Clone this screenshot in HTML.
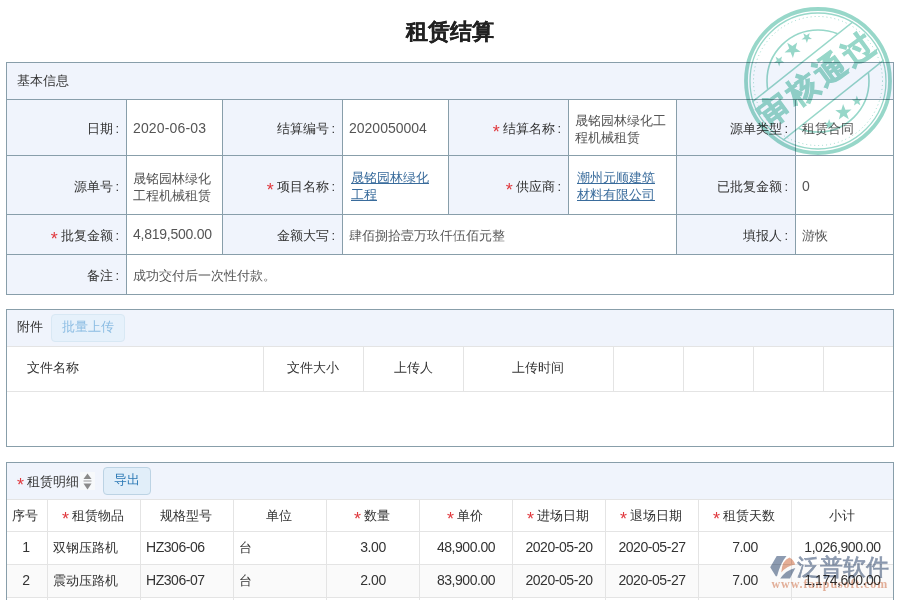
<!DOCTYPE html>
<html><head><meta charset="utf-8">
<style>
*{box-sizing:border-box;margin:0;padding:0}
html,body{width:900px;height:600px;overflow:hidden;background:#fff}
body{position:relative;font-family:"Liberation Sans",sans-serif;font-size:13px;color:#333}
.a{position:absolute;white-space:nowrap;line-height:17px}
.title{position:absolute;left:0;top:18px;width:900px;text-align:center;font-size:22px;font-weight:bold;color:#222;-webkit-text-stroke:0.25px #222;line-height:28px}
.hl{position:absolute;height:1px;background:#889eaa}
.vl{position:absolute;width:1px;background:#889eaa}
.lbg{position:absolute;background:#f0f4fc}
.lab{position:absolute;text-align:right;line-height:17px;color:#333;white-space:nowrap}
.val{position:absolute;line-height:17px;color:#555;white-space:nowrap}
.c{margin-left:2.5px}
.req{display:inline-block;color:#e0393e;font-size:18px;line-height:10px;height:10px;vertical-align:-5px;margin-right:3px}
.lnk{color:#3a6c9c;text-decoration:underline;text-underline-offset:1px}
.ghl{position:absolute;height:1px;background:#e4e4e4}
.gvl{position:absolute;width:1px;background:#e4e4e4}
.th{position:absolute;line-height:17px;color:#333;white-space:nowrap;text-align:center}
.td{position:absolute;line-height:17px;color:#333;white-space:nowrap}
.n{font-size:14px}
.stripe{position:absolute;background:#fafafa}
.tn{font-size:14px;letter-spacing:-0.45px}
</style></head><body>
<div class="title">租赁结算</div>
<div class="lbg" style="left:6px;top:62px;width:887px;height:37px"></div>
<div class="a" style="left:17px;top:72px">基本信息</div>
<div class="lbg" style="left:6px;top:99px;width:120px;height:196px"></div>
<div class="lbg" style="left:222px;top:99px;width:120px;height:156px"></div>
<div class="lbg" style="left:448px;top:99px;width:120px;height:116px"></div>
<div class="lbg" style="left:676px;top:99px;width:119px;height:156px"></div>
<div class="hl" style="left:6px;top:62px;width:888px"></div>
<div class="hl" style="left:6px;top:99px;width:888px"></div>
<div class="hl" style="left:6px;top:155px;width:888px"></div>
<div class="hl" style="left:6px;top:214px;width:888px"></div>
<div class="hl" style="left:6px;top:254px;width:888px"></div>
<div class="hl" style="left:6px;top:294px;width:888px"></div>
<div class="vl" style="left:6px;top:62px;height:233px"></div>
<div class="vl" style="left:893px;top:62px;height:233px"></div>
<div class="vl" style="left:126px;top:99px;height:196px"></div>
<div class="vl" style="left:222px;top:99px;height:156px"></div>
<div class="vl" style="left:342px;top:99px;height:156px"></div>
<div class="vl" style="left:448px;top:99px;height:116px"></div>
<div class="vl" style="left:568px;top:99px;height:116px"></div>
<div class="vl" style="left:676px;top:99px;height:156px"></div>
<div class="vl" style="left:795px;top:99px;height:156px"></div>
<div class="lab" style="right:781px;top:120px">日期<span class="c">:</span></div>
<div class="val " style="left:133px;top:120px"><span class="n" style="letter-spacing:0.15px">2020-06-03</span></div>
<div class="lab" style="right:565px;top:120px">结算编号<span class="c">:</span></div>
<div class="val " style="left:349px;top:120px"><span class="n">2020050004</span></div>
<div class="lab" style="right:339px;top:120px"><span class="req">*</span>结算名称<span class="c">:</span></div>
<div class="val " style="left:575px;top:112px">晟铭园林绿化工<br>程机械租赁</div>
<div class="lab" style="right:112px;top:120px">源单类型<span class="c">:</span></div>
<div class="val " style="left:802px;top:120px">租赁合同</div>
<div class="lab" style="right:781px;top:178px">源单号<span class="c">:</span></div>
<div class="val " style="left:133px;top:170px">晟铭园林绿化<br>工程机械租赁</div>
<div class="lab" style="right:565px;top:178px"><span class="req">*</span>项目名称<span class="c">:</span></div>
<div class="val lnk" style="left:351px;top:169px">晟铭园林绿化<br>工程</div>
<div class="lab" style="right:339px;top:178px"><span class="req">*</span>供应商<span class="c">:</span></div>
<div class="val lnk" style="left:577px;top:169px">潮州元顺建筑<br>材料有限公司</div>
<div class="lab" style="right:112px;top:178px">已批复金额<span class="c">:</span></div>
<div class="val " style="left:802px;top:178px"><span class="n">0</span></div>
<div class="lab" style="right:781px;top:227px"><span class="req">*</span>批复金额<span class="c">:</span></div>
<div class="val " style="left:133px;top:226px"><span class="n" style="letter-spacing:-0.25px">4,819,500.00</span></div>
<div class="lab" style="right:565px;top:227px">金额大写<span class="c">:</span></div>
<div class="val " style="left:349px;top:227px">肆佰捌拾壹万玖仟伍佰元整</div>
<div class="lab" style="right:112px;top:227px">填报人<span class="c">:</span></div>
<div class="val " style="left:802px;top:227px">游恢</div>
<div class="lab" style="right:781px;top:267px">备注<span class="c">:</span></div>
<div class="val " style="left:133px;top:267px">成功交付后一次性付款。</div>
<div class="lbg" style="left:6px;top:309px;width:887px;height:37px"></div>
<div class="a" style="left:17px;top:318px">附件</div>
<div class="a" style="left:51px;top:314px;width:74px;height:28px;border:1px solid #d8e8f4;background:#e6f1fb;border-radius:4px;color:#8cbde3;text-align:center;line-height:24px">批量上传</div>
<div class="hl" style="left:6px;top:309px;width:888px"></div>
<div class="hl" style="left:6px;top:446px;width:888px"></div>
<div class="vl" style="left:6px;top:309px;height:138px"></div>
<div class="vl" style="left:893px;top:309px;height:138px"></div>
<div class="ghl" style="left:7px;top:346px;width:886px"></div>
<div class="ghl" style="left:7px;top:391px;width:886px"></div>
<div class="gvl" style="left:263px;top:346px;height:45px"></div>
<div class="gvl" style="left:363px;top:346px;height:45px"></div>
<div class="gvl" style="left:463px;top:346px;height:45px"></div>
<div class="gvl" style="left:613px;top:346px;height:45px"></div>
<div class="gvl" style="left:683px;top:346px;height:45px"></div>
<div class="gvl" style="left:753px;top:346px;height:45px"></div>
<div class="gvl" style="left:823px;top:346px;height:45px"></div>
<div class="th" style="left:27px;top:359px">文件名称</div>
<div class="th" style="left:263px;top:359px;width:100px">文件大小</div>
<div class="th" style="left:363px;top:359px;width:100px">上传人</div>
<div class="th" style="left:463px;top:359px;width:150px">上传时间</div>
<div class="lbg" style="left:6px;top:462px;width:887px;height:37px"></div>
<div class="a" style="left:17px;top:473px"><span class="req">*</span>租赁明细</div>
<div class="a" style="left:80px;top:472px;width:15px;height:18px;background:#f7f9fb"></div>
<svg class="a" style="left:80px;top:472px" width="15" height="19" viewBox="0 0 15 19"><polygon points="7.5,1.5 11.5,7 3.5,7" fill="#8a8a8a"/><rect x="3.5" y="8.5" width="8" height="1" fill="#9a9a9a"/><polygon points="3.5,11.5 11.5,11.5 7.5,17.5" fill="#8a8a8a"/></svg>
<div class="a" style="left:103px;top:467px;width:48px;height:28px;border:1px solid #bcd3e4;background:#e1eef9;border-radius:4px;color:#2d7ab5;text-align:center;line-height:24px">导出</div>
<div class="hl" style="left:6px;top:462px;width:888px"></div>
<div class="vl" style="left:6px;top:462px;height:138px"></div>
<div class="vl" style="left:893px;top:462px;height:138px"></div>
<div class="stripe" style="left:7px;top:565px;width:886px;height:32px"></div>
<div class="ghl" style="left:7px;top:499px;width:886px"></div>
<div class="ghl" style="left:7px;top:531px;width:886px"></div>
<div class="ghl" style="left:7px;top:564px;width:886px"></div>
<div class="ghl" style="left:7px;top:597px;width:886px"></div>
<div class="gvl" style="left:47px;top:499px;height:101px"></div>
<div class="gvl" style="left:140px;top:499px;height:101px"></div>
<div class="gvl" style="left:233px;top:499px;height:101px"></div>
<div class="gvl" style="left:326px;top:499px;height:101px"></div>
<div class="gvl" style="left:419px;top:499px;height:101px"></div>
<div class="gvl" style="left:512px;top:499px;height:101px"></div>
<div class="gvl" style="left:605px;top:499px;height:101px"></div>
<div class="gvl" style="left:698px;top:499px;height:101px"></div>
<div class="gvl" style="left:791px;top:499px;height:101px"></div>
<div class="th" style="left:5px;top:507px;width:40px">序号</div>
<div class="th" style="left:47px;top:507px;width:92px"><span class="req">*</span>租赁物品</div>
<div class="th" style="left:140px;top:507px;width:92px">规格型号</div>
<div class="th" style="left:233px;top:507px;width:92px">单位</div>
<div class="th" style="left:326px;top:507px;width:92px"><span class="req">*</span>数量</div>
<div class="th" style="left:419px;top:507px;width:92px"><span class="req">*</span>单价</div>
<div class="th" style="left:512px;top:507px;width:92px"><span class="req">*</span>进场日期</div>
<div class="th" style="left:605px;top:507px;width:92px"><span class="req">*</span>退场日期</div>
<div class="th" style="left:698px;top:507px;width:92px"><span class="req">*</span>租赁天数</div>
<div class="th" style="left:791px;top:507px;width:101px">小计</div>
<div class="td" style="left:6px;top:539px;width:40px;text-align:center"><span class="tn">1</span></div>
<div class="td" style="left:53px;top:539px">双钢压路机</div>
<div class="td" style="left:146px;top:539px"><span class="tn">HZ306-06</span></div>
<div class="td" style="left:239px;top:539px">台</div>
<div class="td" style="left:327px;top:539px;width:92px;text-align:center"><span class="tn">3.00</span></div>
<div class="td" style="left:420px;top:539px;width:92px;text-align:center"><span class="tn">48,900.00</span></div>
<div class="td" style="left:513px;top:539px;width:92px;text-align:center"><span class="tn">2020-05-20</span></div>
<div class="td" style="left:606px;top:539px;width:92px;text-align:center"><span class="tn">2020-05-27</span></div>
<div class="td" style="left:699px;top:539px;width:92px;text-align:center"><span class="tn">7.00</span></div>
<div class="td" style="left:792px;top:539px;width:101px;text-align:center"><span class="tn">1,026,900.00</span></div>
<div class="td" style="left:6px;top:572px;width:40px;text-align:center"><span class="tn">2</span></div>
<div class="td" style="left:53px;top:572px">震动压路机</div>
<div class="td" style="left:146px;top:572px"><span class="tn">HZ306-07</span></div>
<div class="td" style="left:239px;top:572px">台</div>
<div class="td" style="left:327px;top:572px;width:92px;text-align:center"><span class="tn">2.00</span></div>
<div class="td" style="left:420px;top:572px;width:92px;text-align:center"><span class="tn">83,900.00</span></div>
<div class="td" style="left:513px;top:572px;width:92px;text-align:center"><span class="tn">2020-05-20</span></div>
<div class="td" style="left:606px;top:572px;width:92px;text-align:center"><span class="tn">2020-05-27</span></div>
<div class="td" style="left:699px;top:572px;width:92px;text-align:center"><span class="tn">7.00</span></div>
<div class="td" style="left:792px;top:572px;width:101px;text-align:center"><span class="tn">1,174,600.00</span></div>
<svg class="a" style="left:0;top:0;mix-blend-mode:multiply" width="900" height="600" viewBox="0 0 900 600">
<defs><mask id="bm"><rect x="0" y="0" width="900" height="600" fill="#fff"/><rect x="738" y="56" width="160" height="50" fill="#000" transform="rotate(-38.5 818 81)"/></mask>
<clipPath id="cc"><circle cx="818" cy="81" r="69"/></clipPath></defs>
<g opacity="0.62">
<circle cx="818" cy="81" r="72" fill="none" stroke="#58bfa8" stroke-width="3.8"/>
<circle cx="818" cy="81" r="68" fill="none" stroke="#58bfa8" stroke-width="1.3"/>
<circle cx="818" cy="81" r="64.5" fill="none" stroke="#58bfa8" stroke-width="1" stroke-dasharray="1 3"/>
<circle cx="818" cy="81" r="51" fill="none" stroke="#58bfa8" stroke-width="1.6" mask="url(#bm)"/>
<g clip-path="url(#cc)" transform="rotate(-38.5 818 81)">
<line x1="738" y1="56.5" x2="898" y2="56.5" stroke="#58bfa8" stroke-width="1.5"/>
<line x1="738" y1="105.5" x2="898" y2="105.5" stroke="#58bfa8" stroke-width="1.5"/>
</g>
<g fill="#58bfa8"><polygon points="775.6,56.7 778.9,58.8 782.0,56.4 781.1,60.2 784.3,62.5 780.4,62.7 779.2,66.5 777.8,62.8 773.8,62.9 776.9,60.4"/><polygon points="860.4,105.3 857.1,103.2 854.0,105.6 854.9,101.8 851.7,99.5 855.6,99.3 856.8,95.5 858.2,99.2 862.2,99.1 859.1,101.6"/><polygon points="787.2,42.8 792.4,46.1 797.2,42.4 795.7,48.3 800.7,51.8 794.6,52.2 792.9,58.0 790.6,52.3 784.5,52.5 789.2,48.6"/><polygon points="848.8,119.2 843.6,115.9 838.8,119.6 840.3,113.7 835.3,110.2 841.4,109.8 843.1,104.0 845.4,109.7 851.5,109.5 846.8,113.4"/><polygon points="803.3,33.2 806.6,35.3 809.7,32.9 808.8,36.7 812.0,39.0 808.1,39.2 806.9,43.0 805.5,39.3 801.5,39.4 804.6,36.9"/><polygon points="832.7,128.8 829.4,126.7 826.3,129.1 827.2,125.3 824.0,123.0 827.9,122.8 829.1,119.0 830.5,122.7 834.5,122.6 831.4,125.1"/></g>
<g transform="translate(-0.5,-2.8)"><text x="818" y="92" text-anchor="middle" font-family="Liberation Sans, sans-serif" font-weight="900" font-size="31" letter-spacing="3.6" fill="#58bfa8" stroke="#58bfa8" stroke-width="1" transform="rotate(-36 818 81)">审核通过</text></g>
</g>
</svg>
<svg class="a" style="left:0;top:0;mix-blend-mode:multiply" width="900" height="600" viewBox="0 0 900 600">
<g opacity="0.9">
<path d="M776.7,556 L786.5,556 Q780.5,563 777,576.3 L775.8,576.3 L770.2,567.2 Z" fill="#8191a9"/>
<path d="M781.3,572.5 Q782,560 789.5,557.5 Q793.5,559.5 795.2,564.5 Q786.5,566 781.3,572.5 Z" fill="#e3a58a"/>
<path d="M780.2,578.6 Q786,570 795.3,568 L790,578.6 Z" fill="#8191a9"/>
</g>
<text x="797" y="575" font-family="Liberation Sans, sans-serif" font-size="23" font-weight="500" fill="#7f8ea6" stroke="#7f8ea6" stroke-width="0.7" opacity="0.9">泛普软件</text>
<text x="771.5" y="587.5" font-family="Liberation Serif, serif" font-size="12" font-weight="bold" fill="#e3a58a" opacity="0.85" letter-spacing="0.9">www.fanpusoft.com</text>
</svg>
</body></html>
